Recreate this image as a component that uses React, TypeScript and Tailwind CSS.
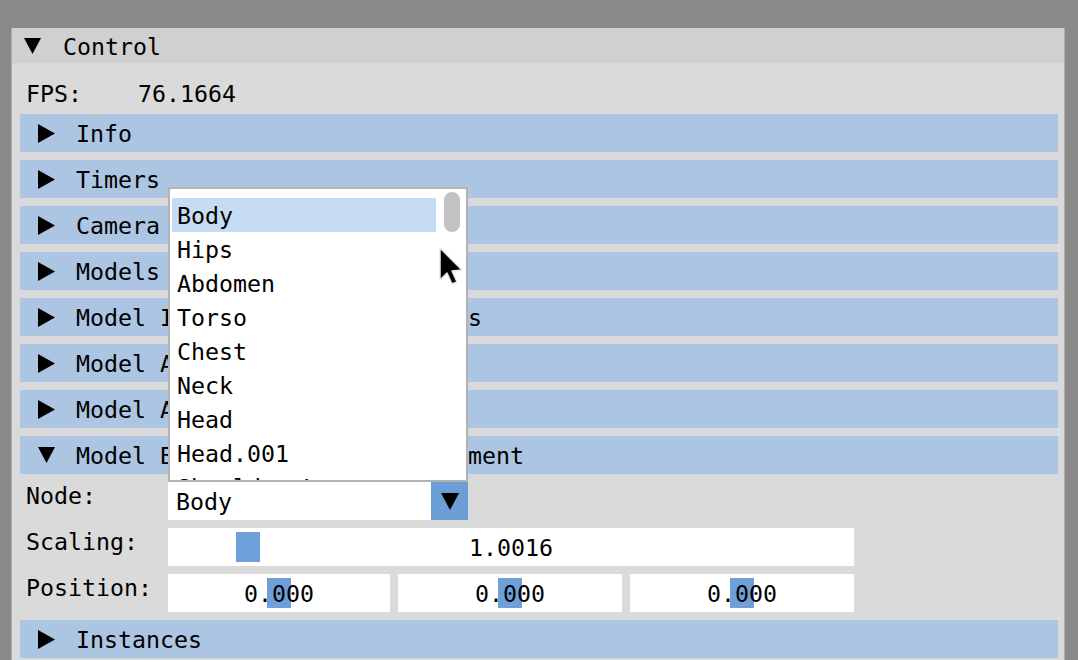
import React from "react";

const FONT = "font-['DejaVu_Sans_Mono','Liberation_Mono',monospace] text-[23.25px] leading-[26px] text-black";

function RightTri() {
  return (
    <svg width="17" height="19" viewBox="0 0 17 19" className="shrink-0">
      <polygon points="0,0 17,9.5 0,19" fill="#000" />
    </svg>
  );
}

function DownTri({ w = 17, h = 16 }: { w?: number; h?: number }) {
  return (
    <svg width={w} height={h} viewBox={`0 0 ${w} ${h}`} className="shrink-0">
      <polygon points={`0,0 ${w},0 ${w / 2},${h}`} fill="#000" />
    </svg>
  );
}

function Header({ title, open = false }: { title: string; open?: boolean }) {
  return (
    <div className="h-[38px] bg-[#acc5e3] flex items-center whitespace-pre overflow-hidden">
      <div className="ml-[18px] w-[17px] flex justify-center">
        {open ? <DownTri w={17} h={16} /> : <RightTri />}
      </div>
      <span className="ml-[21px] relative top-[1px]">{title}</span>
    </div>
  );
}

function SliderField({ width, text, grabLeft }: { width: number; text: string; grabLeft: number }) {
  return (
    <div className="relative h-[38px] bg-white flex items-center justify-center" style={{ width }}>
      <div className="absolute top-[4px] h-[30px] w-[24px] bg-[#6f9fd8]" style={{ left: grabLeft }} />
      <span className="relative top-[1px]">{text}</span>
    </div>
  );
}

const items = ["Body", "Hips", "Abdomen", "Torso", "Chest", "Neck", "Head", "Head.001", "Shoulder.L"];

export default function App() {
  return (
    <div className={`relative w-[1078px] h-[660px] overflow-hidden bg-[#898989] ${FONT}`}>
      <div className="ml-[11px] mt-[28px] w-[1054px] border-x border-[#ababab]">
        {/* Title bar */}
        <div className="h-[35px] bg-[#d0d0d0] flex items-center">
          <div className="ml-[12px]">
            <DownTri w={17} h={16} />
          </div>
          <span className="ml-[22px] relative top-[1px]">Control</span>
        </div>
        {/* Body */}
        <div className="bg-[#dadada] pt-[17px] pl-[8px] pr-[6px] pb-[20px] flex flex-col gap-[8px]">
          <div className="pl-[6px] whitespace-pre relative top-[1px]">FPS:    76.1664</div>
          <Header title="Info" />
          <Header title="Timers" />
          <Header title="Camera" />
          <Header title="Models" />
          <Header title="Model Instance Configurations" />
          <Header title="Model Animation Mappings" />
          <Header title="Model Animation Blending" />
          <Header title="Model Bones Transform Adjustment" open />
          {/* Node */}
          <div className="flex h-[38px]">
            <div className="w-[148px] pl-[6px] relative top-[1px]">Node:</div>
            <div className="w-[300px] h-[38px] bg-white flex items-center">
              <span className="ml-[8px] flex-1 relative top-[1px]">Body</span>
              <div className="w-[37px] h-[38px] bg-[#6b9ed6] flex items-center justify-center">
                <DownTri w={18} h={17} />
              </div>
            </div>
          </div>
          {/* Scaling */}
          <div className="flex h-[38px]">
            <div className="w-[148px] pl-[6px] relative top-[1px]">Scaling:</div>
            <SliderField width={686} text="1.0016" grabLeft={68} />
          </div>
          {/* Position */}
          <div className="flex h-[38px]">
            <div className="w-[148px] pl-[6px] relative top-[1px]">Position:</div>
            <div className="flex gap-[8px]">
              <SliderField width={222} text="0.000" grabLeft={99} />
              <SliderField width={224} text="0.000" grabLeft={100} />
              <SliderField width={224} text="0.000" grabLeft={100} />
            </div>
          </div>
          <Header title="Instances" />
        </div>
      </div>

      {/* Combo popup */}
      <div className="absolute left-[168px] top-[187px] w-[300px] h-[295px] border-2 border-[#b3b3b3] bg-white overflow-hidden">
        <div className="pt-[9px] pl-[2px] w-[266px] flex flex-col">
          {items.map((it, i) => (
            <div
              key={it}
              className={`h-[34px] flex items-center pl-[5px] ${i === 0 ? "bg-[#c6dcf2]" : ""}`}
            >
              <span className="relative top-[1px]">{it}</span>
            </div>
          ))}
        </div>
        <div className="absolute left-[274px] top-[3px] w-[16px] h-[40px] rounded-full bg-[#c3c3c3]" />
      </div>

      {/* Mouse cursor */}
      <svg className="absolute left-[438px] top-[246px]" width="26" height="42" viewBox="0 0 26 42">
        <path d="M2 2 V34 L9 27 L14 38 L19 36 L14 25 L24 24 Z" fill="#000" stroke="#e6e6e6" strokeWidth="1.5" strokeLinejoin="round" />
      </svg>
    </div>
  );
}
